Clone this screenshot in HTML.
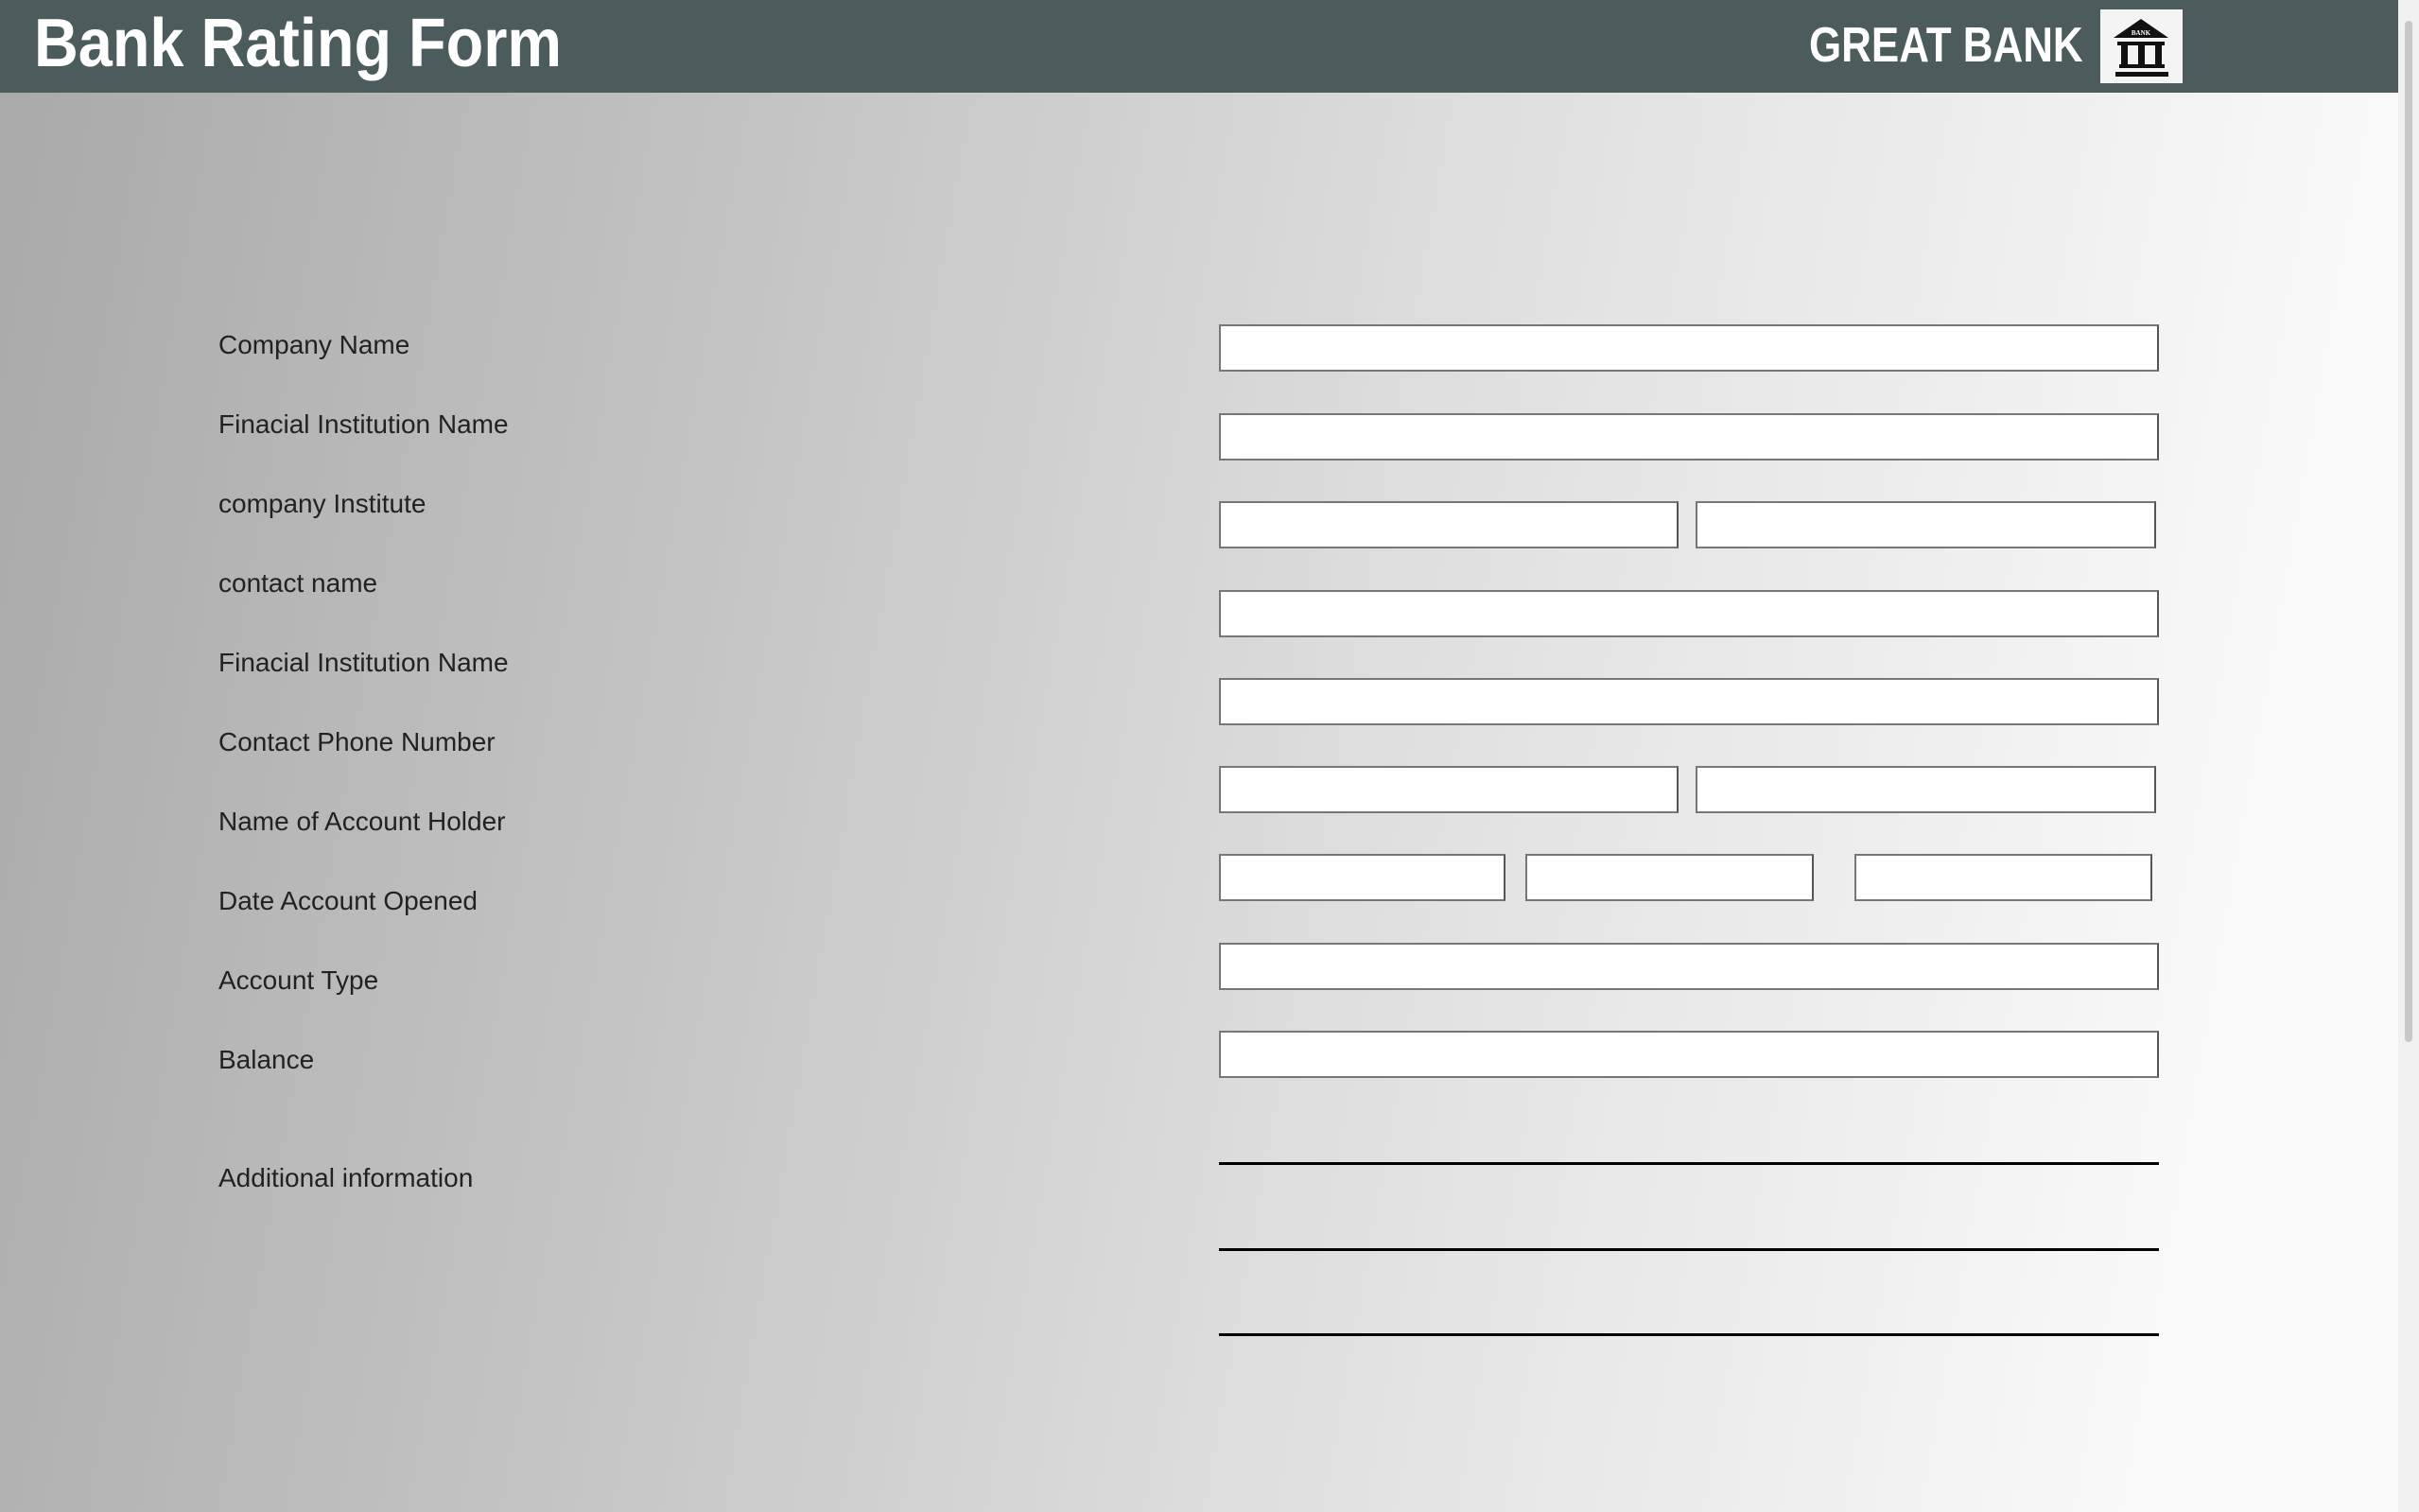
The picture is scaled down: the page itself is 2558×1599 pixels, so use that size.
<!DOCTYPE html>
<html><head><meta charset="utf-8"><style>
html,body{margin:0;padding:0;width:2558px;height:1599px;overflow:hidden;}
body{position:relative;background:linear-gradient(100deg,#a9a9a9 0%,#c4c4c4 30%,#e2e2e2 60%,#fbfbfb 92%);font-family:"Liberation Sans",sans-serif;}
.hdr{position:absolute;left:0;top:0;width:2536px;height:98px;background:#4c5c5c;}
.title{position:absolute;left:36px;top:5px;color:#fff;font-size:72px;font-weight:bold;white-space:nowrap;transform-origin:left top;transform:scaleX(0.9);}
.brand{position:absolute;left:1913px;top:18px;color:#fff;font-size:52px;font-weight:bold;white-space:nowrap;transform-origin:left top;transform:scaleX(0.845);}
.logo{position:absolute;left:2221px;top:10px;width:87px;height:78px;background:#f4f4f4;}
.lbl{position:absolute;left:231px;color:#222;font-size:28px;line-height:30px;white-space:nowrap;}
.in{position:absolute;height:46px;background:#fff;border:2px solid #777;border-right-color:#555;box-sizing:content-box;}
.ln{position:absolute;left:1289px;width:994px;height:3px;background:#000;}
.sb{position:absolute;left:2536px;top:0;width:22px;height:1599px;background:#f1f1f1;}
.thumb{position:absolute;left:2543px;top:22px;width:8px;height:1080px;background:#c8c8c8;border-radius:4px;}
</style></head><body>
<div class="hdr">
<div class="title">Bank Rating Form</div>
<div class="brand">GREAT BANK</div>
<div class="logo"><svg width="87" height="78" viewBox="0 0 87 78">
<polygon points="43,10 14,30 72,30" fill="#111"/>
<text x="43" y="27" font-size="7" fill="#fff" text-anchor="middle" font-family="Liberation Serif" font-weight="bold">BANK</text>
<rect x="18" y="34" width="50" height="4" fill="#111"/>
<rect x="22" y="38" width="7" height="22" fill="#111"/>
<rect x="40" y="38" width="7" height="22" fill="#111"/>
<rect x="58" y="38" width="7" height="22" fill="#111"/>
<rect x="20" y="58" width="48" height="4" fill="#111"/>
<rect x="16" y="66" width="56" height="5" fill="#111"/>
</svg></div>
</div>
<div class="sb"></div><div class="thumb"></div>

<div class="lbl" style="top:350px">Company Name</div>
<div class="lbl" style="top:434px">Finacial Institution Name</div>
<div class="lbl" style="top:518px">company Institute</div>
<div class="lbl" style="top:602px">contact name</div>
<div class="lbl" style="top:686px">Finacial Institution Name</div>
<div class="lbl" style="top:770px">Contact Phone Number</div>
<div class="lbl" style="top:854px">Name of Account Holder</div>
<div class="lbl" style="top:938px">Date Account Opened</div>
<div class="lbl" style="top:1022px">Account Type</div>
<div class="lbl" style="top:1106px">Balance</div>
<div class="lbl" style="top:1231px">Additional information</div>

<div class="in" style="left:1289px;top:343px;width:990px"></div>
<div class="in" style="left:1289px;top:437px;width:990px"></div>
<div class="in" style="left:1289px;top:530px;width:482px"></div>
<div class="in" style="left:1793px;top:530px;width:483px"></div>
<div class="in" style="left:1289px;top:624px;width:990px"></div>
<div class="in" style="left:1289px;top:717px;width:990px"></div>
<div class="in" style="left:1289px;top:810px;width:482px"></div>
<div class="in" style="left:1793px;top:810px;width:483px"></div>
<div class="in" style="left:1289px;top:903px;width:299px"></div>
<div class="in" style="left:1613px;top:903px;width:301px"></div>
<div class="in" style="left:1961px;top:903px;width:311px"></div>
<div class="in" style="left:1289px;top:997px;width:990px"></div>
<div class="in" style="left:1289px;top:1090px;width:990px"></div>

<div class="ln" style="top:1229px"></div>
<div class="ln" style="top:1320px"></div>
<div class="ln" style="top:1410px"></div>
</body></html>
